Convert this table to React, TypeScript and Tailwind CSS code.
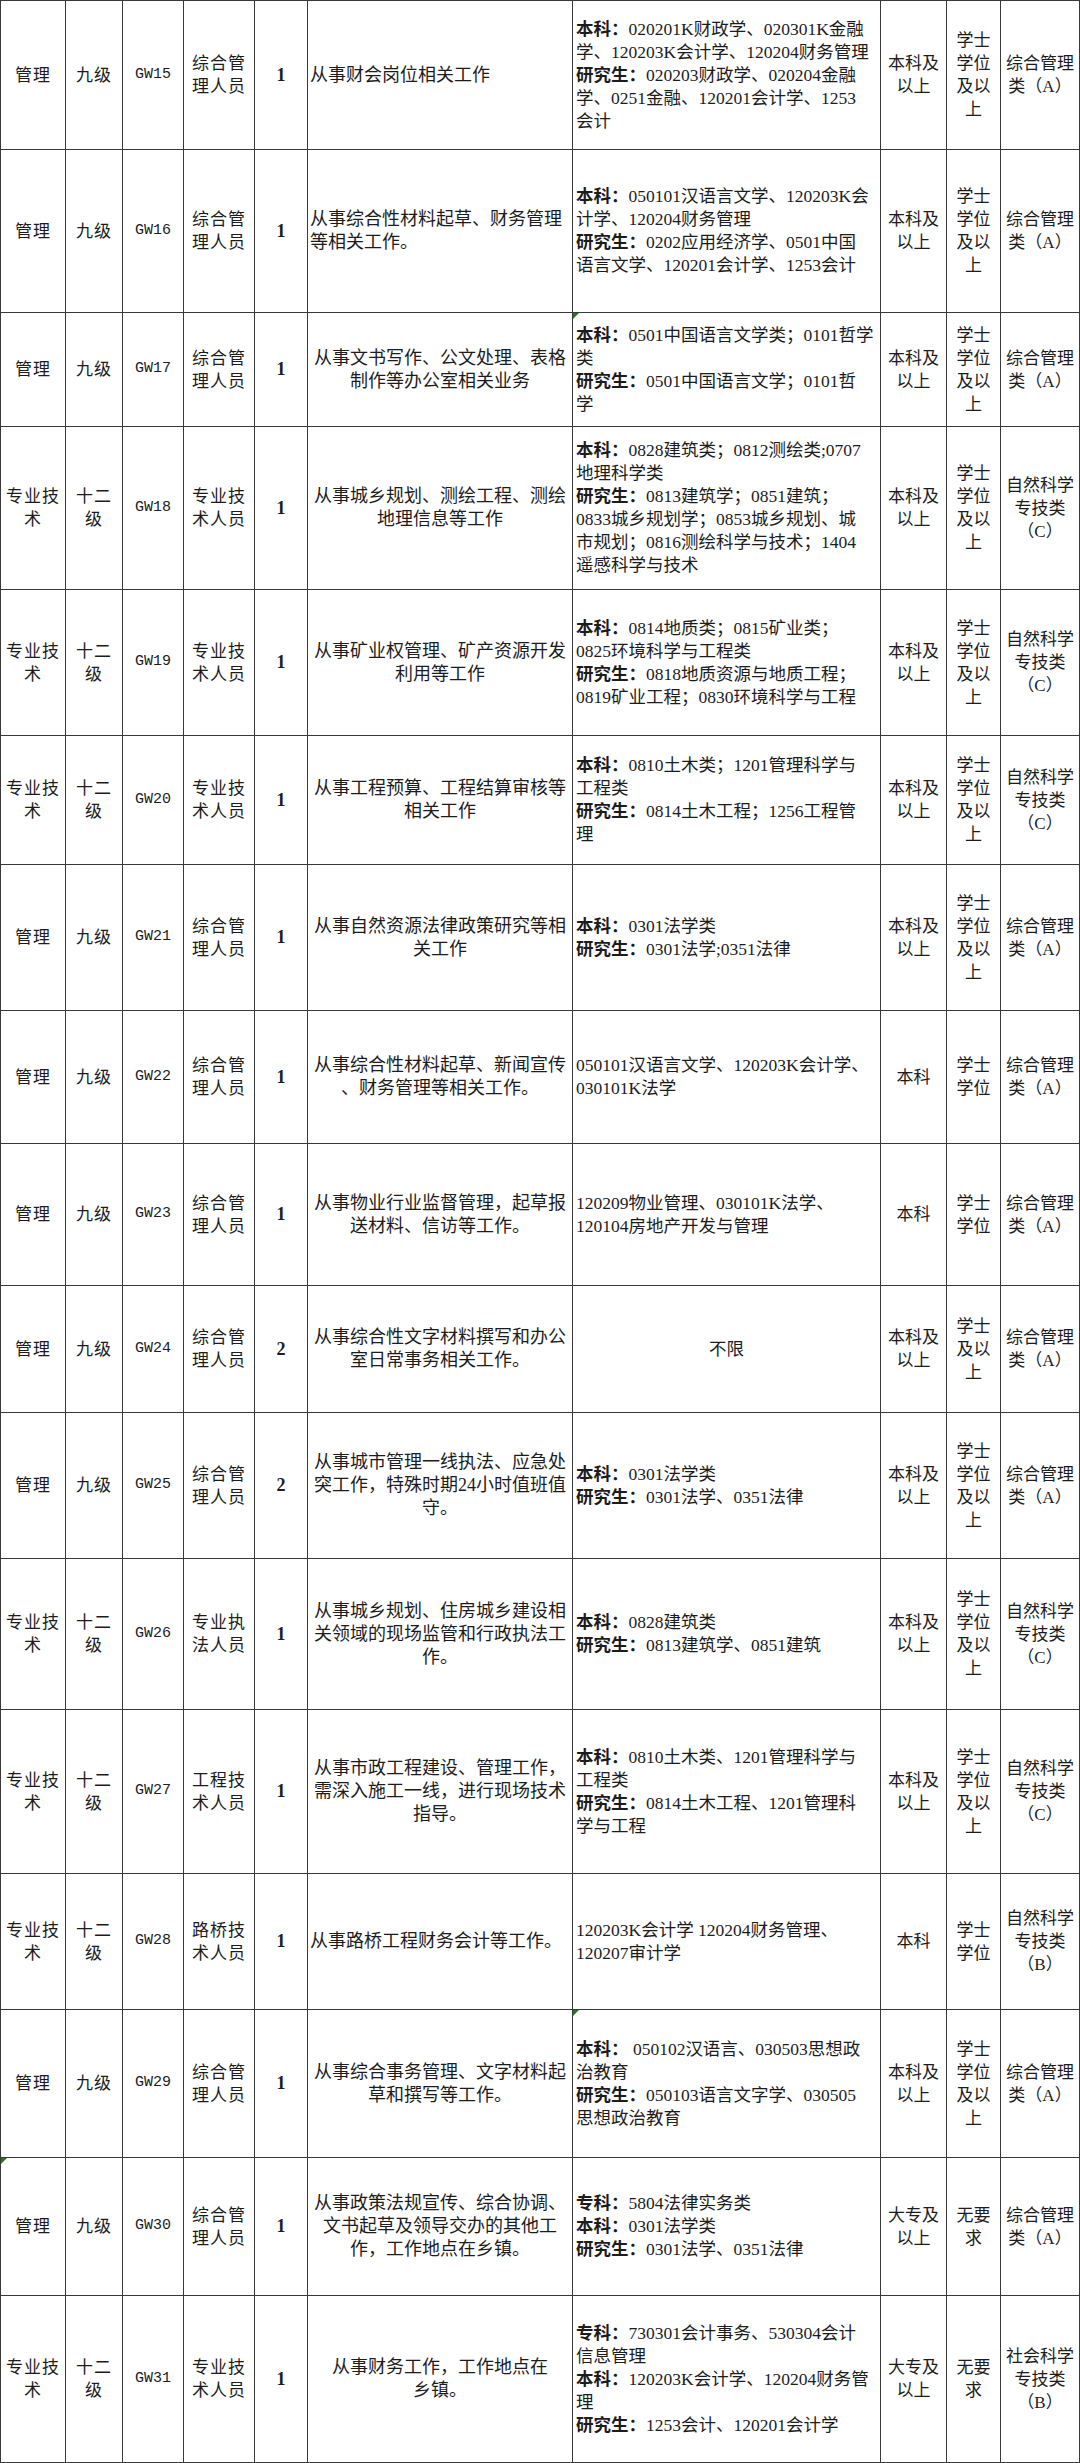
import React from "react";

type Row = {
  h: string;
  c1: string[];
  c2: string[];
  code: string;
  c4: string[];
  n: string;
  desc: string[];
  descLeft?: boolean;
  content: string[];
  contentCenter?: boolean;
  edu: string[];
  deg: string[];
  cat: string[];
  mark?: "content" | "first";
};

const GL = ["管理"];
const G9 = ["九级"];
const ZY = ["专业技", "术"];
const G12 = ["十二", "级"];
const ZH = ["综合管", "理人员"];
const ZJ = ["专业技", "术人员"];
const BK = ["本科及", "以上"];
const XW = ["学士", "学位", "及以", "上"];
const CA = ["综合管理", "类（A）"];
const CC = ["自然科学", "专技类", "（C）"];

const rows: Row[] = [
  {
    h: "h-[149px]", c1: GL, c2: G9, code: "GW15", c4: ZH, n: "1",
    desc: ["从事财会岗位相关工作"], descLeft: true,
    content: [
      "本科：020201K财政学、020301K金融",
      "学、120203K会计学、120204财务管理",
      "研究生：020203财政学、020204金融",
      "学、0251金融、120201会计学、1253",
      "会计",
    ],
    edu: BK, deg: XW, cat: CA,
  },
  {
    h: "h-[163px]", c1: GL, c2: G9, code: "GW16", c4: ZH, n: "1",
    desc: ["从事综合性材料起草、财务管理", "等相关工作。"], descLeft: true,
    content: [
      "本科：050101汉语言文学、120203K会",
      "计学、120204财务管理",
      "研究生：0202应用经济学、0501中国",
      "语言文学、120201会计学、1253会计",
    ],
    edu: BK, deg: XW, cat: CA,
  },
  {
    h: "h-[114px]", c1: GL, c2: G9, code: "GW17", c4: ZH, n: "1",
    desc: ["从事文书写作、公文处理、表格", "制作等办公室相关业务"],
    content: [
      "本科：0501中国语言文学类；0101哲学",
      "类",
      "研究生：0501中国语言文学；0101哲",
      "学",
    ],
    edu: BK, deg: XW, cat: CA, mark: "content",
  },
  {
    h: "h-[163px]", c1: ZY, c2: G12, code: "GW18", c4: ZJ, n: "1",
    desc: ["从事城乡规划、测绘工程、测绘", "地理信息等工作"],
    content: [
      "本科：0828建筑类；0812测绘类;0707",
      "地理科学类",
      "研究生：0813建筑学；0851建筑；",
      "0833城乡规划学；0853城乡规划、城",
      "市规划；0816测绘科学与技术；1404",
      "遥感科学与技术",
    ],
    edu: BK, deg: XW, cat: CC,
  },
  {
    h: "h-[146px]", c1: ZY, c2: G12, code: "GW19", c4: ZJ, n: "1",
    desc: ["从事矿业权管理、矿产资源开发", "利用等工作"],
    content: [
      "本科：0814地质类；0815矿业类；",
      "0825环境科学与工程类",
      "研究生：0818地质资源与地质工程；",
      "0819矿业工程；0830环境科学与工程",
    ],
    edu: BK, deg: XW, cat: CC,
  },
  {
    h: "h-[129px]", c1: ZY, c2: G12, code: "GW20", c4: ZJ, n: "1",
    desc: ["从事工程预算、工程结算审核等", "相关工作"],
    content: [
      "本科：0810土木类；1201管理科学与",
      "工程类",
      "研究生：0814土木工程；1256工程管",
      "理",
    ],
    edu: BK, deg: XW, cat: CC,
  },
  {
    h: "h-[146px]", c1: GL, c2: G9, code: "GW21", c4: ZH, n: "1",
    desc: ["从事自然资源法律政策研究等相", "关工作"],
    content: ["本科：0301法学类", "研究生：0301法学;0351法律"],
    edu: BK, deg: XW, cat: CA,
  },
  {
    h: "h-[133px]", c1: GL, c2: G9, code: "GW22", c4: ZH, n: "1",
    desc: ["从事综合性材料起草、新闻宣传", "、财务管理等相关工作。"],
    content: ["050101汉语言文学、120203K会计学、", "030101K法学"],
    edu: ["本科"], deg: ["学士", "学位"], cat: CA,
  },
  {
    h: "h-[142px]", c1: GL, c2: G9, code: "GW23", c4: ZH, n: "1",
    desc: ["从事物业行业监督管理，起草报", "送材料、信访等工作。"],
    content: ["120209物业管理、030101K法学、", "120104房地产开发与管理"],
    edu: ["本科"], deg: ["学士", "学位"], cat: CA,
  },
  {
    h: "h-[127px]", c1: GL, c2: G9, code: "GW24", c4: ZH, n: "2",
    desc: ["从事综合性文字材料撰写和办公", "室日常事务相关工作。"],
    content: ["不限"], contentCenter: true,
    edu: BK, deg: ["学士", "及以", "上"], cat: CA,
  },
  {
    h: "h-[146px]", c1: GL, c2: G9, code: "GW25", c4: ZH, n: "2",
    desc: ["从事城市管理一线执法、应急处", "突工作，特殊时期24小时值班值", "守。"],
    content: ["本科：0301法学类", "研究生：0301法学、0351法律"],
    edu: BK, deg: XW, cat: CA,
  },
  {
    h: "h-[151px]", c1: ZY, c2: G12, code: "GW26", c4: ["专业执", "法人员"], n: "1",
    desc: ["从事城乡规划、住房城乡建设相", "关领域的现场监管和行政执法工", "作。"],
    content: ["本科：0828建筑类", "研究生：0813建筑学、0851建筑"],
    edu: BK, deg: XW, cat: CC,
  },
  {
    h: "h-[164px]", c1: ZY, c2: G12, code: "GW27", c4: ["工程技", "术人员"], n: "1",
    desc: ["从事市政工程建设、管理工作，", "需深入施工一线，进行现场技术", "指导。"],
    content: [
      "本科：0810土木类、1201管理科学与",
      "工程类",
      "研究生：0814土木工程、1201管理科",
      "学与工程",
    ],
    edu: BK, deg: XW, cat: CC,
  },
  {
    h: "h-[136px]", c1: ZY, c2: G12, code: "GW28", c4: ["路桥技", "术人员"], n: "1",
    desc: ["从事路桥工程财务会计等工作。"], descLeft: true,
    content: ["120203K会计学 120204财务管理、", "120207审计学"],
    edu: ["本科"], deg: ["学士", "学位"], cat: ["自然科学", "专技类", "（B）"],
  },
  {
    h: "h-[148px]", c1: GL, c2: G9, code: "GW29", c4: ZH, n: "1",
    desc: ["从事综合事务管理、文字材料起", "草和撰写等工作。"],
    content: [
      "本科： 050102汉语言、030503思想政",
      "治教育",
      "研究生：050103语言文字学、030505",
      "思想政治教育",
    ],
    edu: BK, deg: XW, cat: CA, mark: "content",
  },
  {
    h: "h-[138px]", c1: GL, c2: G9, code: "GW30", c4: ZH, n: "1",
    desc: ["从事政策法规宣传、综合协调、", "文书起草及领导交办的其他工", "作，工作地点在乡镇。"],
    content: ["专科：5804法律实务类", "本科：0301法学类", "研究生：0301法学、0351法律"],
    edu: ["大专及", "以上"], deg: ["无要", "求"], cat: CA, mark: "first",
  },
  {
    h: "h-[167px]", c1: ZY, c2: G12, code: "GW31", c4: ZJ, n: "1",
    desc: ["从事财务工作，工作地点在", "乡镇。"],
    content: [
      "专科：730301会计事务、530304会计",
      "信息管理",
      "本科：120203K会计学、120204财务管",
      "理",
      "研究生：1253会计、120201会计学",
    ],
    edu: ["大专及", "以上"], deg: ["无要", "求"], cat: ["社会科学", "专技类", "（B）"],
  },
];

const cell =
  "relative flex flex-col items-center justify-center border-r border-b border-[#3a3a3a] text-center";

function Lines({ lines }: { lines: string[] }) {
  return (
    <>
      {lines.map((l, i) => (
        <div key={i} className="whitespace-nowrap">
          {l}
        </div>
      ))}
    </>
  );
}

function ContentLine({ text }: { text: string }) {
  const m = text.match(/^(本科：|研究生：|专科：)(.*)$/);
  if (!m) return <div className="whitespace-nowrap">{text}</div>;
  return (
    <div className="whitespace-nowrap">
      <span className="font-bold">{m[1]}</span>
      {m[2]}
    </div>
  );
}

function Mark() {
  return (
    <div className="absolute left-0 top-0 h-0 w-0 border-t-[6px] border-r-[6px] border-t-[#1e7b1e] border-r-transparent" />
  );
}

export default function App() {
  return (
    <div className="min-h-screen bg-white">
      <div className="w-[1080px] border-t border-l border-[#3a3a3a] bg-white text-[#1c1c1c] font-['Liberation_Serif','Noto_Sans_CJK_SC',serif]">
        {rows.map((r) => (
          <div
            key={r.code}
            className={`grid grid-cols-[65px_57px_61px_71px_53px_265px_308px_66px_54px_79px] ${r.h}`}
          >
            <div className={`${cell} text-[17px] leading-[23px] tracking-[1px]`}>
              {r.mark === "first" && <Mark />}
              <Lines lines={r.c1} />
            </div>
            <div className={`${cell} text-[17px] leading-[23px] tracking-[1px]`}>
              <Lines lines={r.c2} />
            </div>
            <div className={`${cell} font-['Liberation_Mono',monospace] text-[15px]`}>
              {r.code}
            </div>
            <div className={`${cell} text-[17px] leading-[23px] tracking-[1px]`}>
              <Lines lines={r.c4} />
            </div>
            <div className={`${cell} text-[18px] font-bold`}>{r.n}</div>
            <div
              className={`${cell} text-[18px] leading-[23px] ${
                r.descLeft ? "!items-start pl-[2px] text-left" : ""
              }`}
            >
              <Lines lines={r.desc} />
            </div>
            <div
              className={`${cell} text-[17.5px] leading-[23px] ${
                r.contentCenter ? "" : "!items-start pl-[3px] text-left"
              }`}
            >
              {r.mark === "content" && <Mark />}
              {r.content.map((l, i) => (
                <ContentLine key={i} text={l} />
              ))}
            </div>
            <div className={`${cell} text-[17px] leading-[23px]`}>
              <Lines lines={r.edu} />
            </div>
            <div className={`${cell} text-[17px] leading-[23px]`}>
              <Lines lines={r.deg} />
            </div>
            <div className={`${cell} text-[17px] leading-[23px]`}>
              <Lines lines={r.cat} />
            </div>
          </div>
        ))}
      </div>
    </div>
  );
}
